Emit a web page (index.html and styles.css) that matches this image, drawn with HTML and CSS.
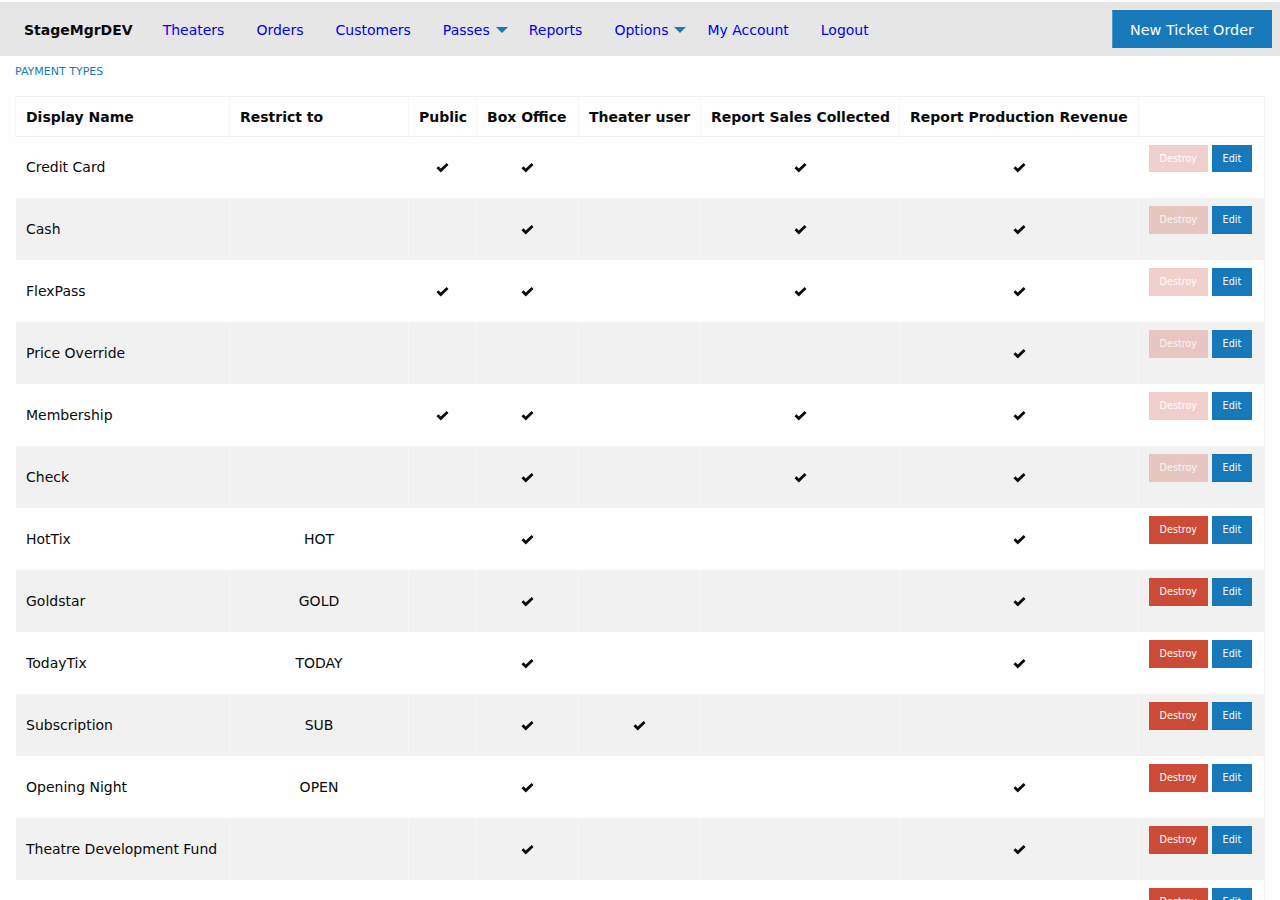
FILE: index.html
```html
<!DOCTYPE html>
<html lang="en">
<head>
    <meta charset="UTF-8">
    <meta name="viewport" content="width=device-width, initial-scale=1.0">
    <title>Payment Types</title>
    <link rel="stylesheet" href="styles.css">
</head>
<body>
    <div class="top-bar">
        <ul class="menu">
            <li class="menu-text">StageMgrDEV</li>
            <li><a href="#">Theaters</a></li>
            <li><a href="#">Orders</a></li>
            <li><a href="#">Customers</a></li>
            <li class="has-sub"><a href="#">Passes</a></li>
            <li><a href="#">Reports</a></li>
            <li class="has-sub"><a href="#">Options</a></li>
            <li><a href="#">My Account</a></li>
            <li><a href="#">Logout</a></li>
        </ul>
        <a href="#" class="button big">New Ticket Order</a>
    </div>

    <div class="page">
        <ul class="breadcrumbs">
            <li><a href="#">Payment Types</a></li>
        </ul>

        <table class="payment-types">
            <colgroup>
                <col style="width: 214px">
                <col style="width: 179px">
                <col style="width: 68px">
                <col style="width: 102px">
                <col style="width: 122px">
                <col style="width: 199px">
                <col style="width: 239px">
                <col style="width: 126px">
            </colgroup>
            <thead>
                <tr>
                    <th>Display Name</th>
                    <th>Restrict to</th>
                    <th>Public</th>
                    <th>Box Office</th>
                    <th>Theater user</th>
                    <th>Report Sales Collected</th>
                    <th>Report Production Revenue</th>
                    <th></th>
                </tr>
            </thead>
            <tbody id="rows"></tbody>
        </table>
    </div>

    <script>
        // name, restrict, public, box office, theater user, sales, production, locked
        const paymentTypes = [
            ['Credit Card', '', 1, 1, 0, 1, 1, true],
            ['Cash', '', 0, 1, 0, 1, 1, true],
            ['FlexPass', '', 1, 1, 0, 1, 1, true],
            ['Price Override', '', 0, 0, 0, 0, 1, true],
            ['Membership', '', 1, 1, 0, 1, 1, true],
            ['Check', '', 0, 1, 0, 1, 1, true],
            ['HotTix', 'HOT', 0, 1, 0, 0, 1, false],
            ['Goldstar', 'GOLD', 0, 1, 0, 0, 1, false],
            ['TodayTix', 'TODAY', 0, 1, 0, 0, 1, false],
            ['Subscription', 'SUB', 0, 1, 1, 0, 0, false],
            ['Opening Night', 'OPEN', 0, 1, 0, 0, 1, false],
            ['Theatre Development Fund', '', 0, 1, 0, 0, 1, false],
            ['Group Sales', 'GROUP', 0, 1, 0, 0, 1, false]
        ];

        const checkIcon = '<svg class="check" width="13" height="10" viewBox="0 0 13 10"><path d="M0.5 5.2 L2.4 3.3 L4.8 5.6 L10.6 0 L12.5 1.9 L4.8 9.4 Z" fill="#0a0a0a"/></svg>';
        const rows = document.getElementById('rows');

        paymentTypes.forEach(type => {
            const tr = document.createElement('tr');
            const checks = type.slice(2, 7).map(on => `<td>${on ? checkIcon : ''}</td>`).join('');
            tr.innerHTML = `
                <td class="name">${type[0]}</td>
                <td>${type[1]}</td>
                ${checks}
                <td class="actions"><a href="#" class="button tiny alert${type[7] ? ' disabled' : ''}">Destroy</a> <a href="#" class="button tiny">Edit</a></td>
            `;
            rows.appendChild(tr);
        });
    </script>
</body>
</html>
```

FILE: styles.css
```css
body {
    font-family: "DejaVu Sans", Verdana, sans-serif;
    font-size: 14px;
    color: #0a0a0a;
    margin: 0;
    background: #fefefe;
}

a {
    text-decoration: none;
}

.top-bar {
    margin-top: 2px;
    padding: 8px;
    background: #e6e6e6;
    display: flex;
    align-items: center;
    justify-content: space-between;
}

.menu {
    list-style: none;
    margin: 0;
    padding: 0;
    display: flex;
    align-items: center;
}

.menu li {
    line-height: 1;
    padding-top: 2px;
}

.menu .menu-text {
    font-weight: bold;
    padding: 13px 14px 11px 16px;
}

.menu a {
    display: block;
    padding: 11px 16px;
    color: #0000ee;
}

.menu .has-sub a {
    position: relative;
    padding-right: 23px;
}

.menu .has-sub a::after {
    content: "";
    position: absolute;
    right: 5px;
    top: 50%;
    margin-top: -3px;
    border: 6px solid transparent;
    border-top-color: #1779ba;
    border-bottom-width: 0;
}

.button {
    display: inline-block;
    background: #1779ba;
    color: #fefefe;
    border: 1px solid transparent;
    line-height: 1;
    text-align: center;
    vertical-align: middle;
}

.button.big {
    font-size: 14.4px;
    height: 38px;
    line-height: 38px;
    padding: 0 17px;
    box-sizing: border-box;
    width: 160px;
    border-left-color: #4a97cb;
}

.button.tiny {
    font-size: 9.6px;
    padding: 8.2px 9.6px;
}

.button.alert {
    background: #cc4b37;
}

.button.disabled {
    opacity: 0.25;
}

.page {
    padding: 0 15px;
}

.breadcrumbs {
    list-style: none;
    margin: 8px 0 15px;
    padding: 0;
    font-size: 11px;
    line-height: 16.5px;
    text-transform: uppercase;
}

.breadcrumbs a {
    color: #1779ba;
}

.payment-types {
    width: 1250px;
    table-layout: fixed;
    border-collapse: collapse;
    border: 1px solid #f1f1f1;
}

.payment-types thead {
    border-bottom: 1px solid #f1f1f1;
}

.payment-types th {
    text-align: left;
    font-weight: bold;
    padding: 10px 10px 8px;
    line-height: 21px;
    border-left: 1px solid #f6f6f6;
    white-space: nowrap;
}

.payment-types td {
    text-align: center;
    height: 62px;
    padding: 0 10px;
    box-sizing: border-box;
    border-left: 1px solid rgba(255, 255, 255, 0.4);
}

.payment-types td.name {
    text-align: left;
}

.payment-types tbody tr:nth-child(odd) {
    background: #fefefe;
}

.payment-types tbody tr:nth-child(even) {
    background: #f1f1f1;
}

.payment-types td.actions {
    text-align: left;
    vertical-align: top;
    padding-top: 8px;
}

.check {
    display: inline-block;
    vertical-align: middle;
}
```
